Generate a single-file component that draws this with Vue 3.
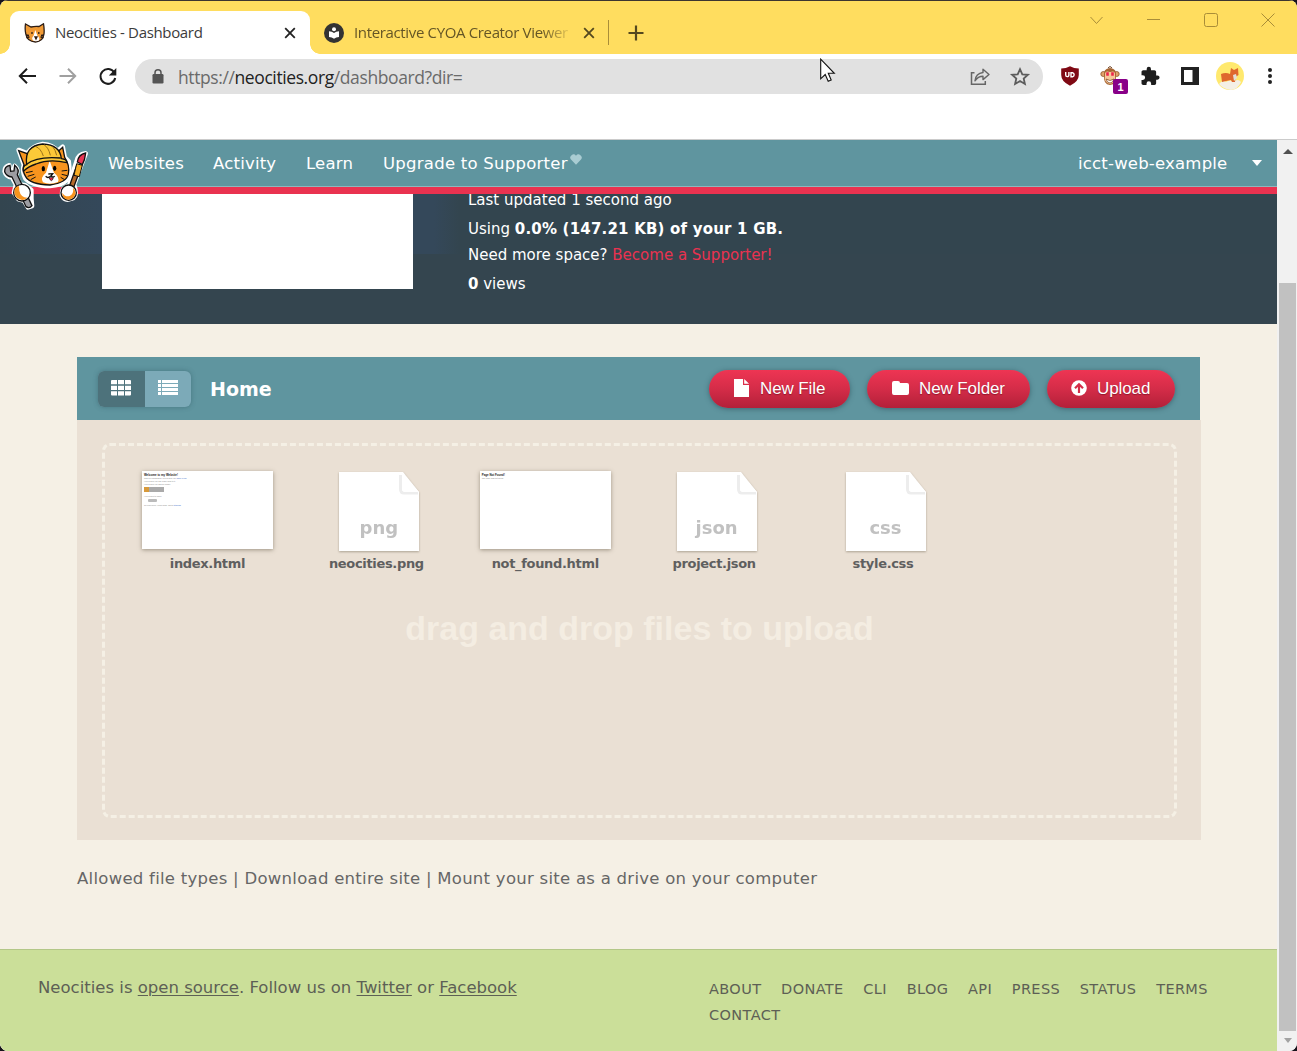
<script setup>
const navLinks = [
  { label: 'Websites', cls: 'websites' },
  { label: 'Activity', cls: 'activity' },
  { label: 'Learn', cls: 'learn' },
]
const files = [
  { name: 'index.html', kind: 'index' },
  { name: 'neocities.png', kind: 'doc', ext: 'png' },
  { name: 'not_found.html', kind: 'missing' },
  { name: 'project.json', kind: 'doc', ext: 'json' },
  { name: 'style.css', kind: 'doc', ext: 'css' },
]
const footerLinks = ['ABOUT', 'DONATE', 'CLI', 'BLOG', 'API', 'PRESS', 'STATUS', 'TERMS', 'CONTACT']
</script>

<template>
  <div class="window">
    <header class="titlebar">
      <div class="tab active">
        <svg class="favicon" width="22" height="20" viewBox="0 0 22 20">
          <path d="M1.500 1 L7 4 Q11 3 15 3.500 L19.500 .8 Q20.500 6 20 11 Q19 18.500 11.500 19 Q3 18.500 1.800 11 Q.7 6 1.500 1Z" fill="#f09a35" stroke="#2d1d15" stroke-width="1.300" />
          <path d="M11.300 7 L9.500 13 Q7 15 9 17.500 Q12 19 15 17.500 Q16 14.500 13.500 13Z" fill="#fff" />
          <path d="M8 9v2M14.800 9v2M11 14h2l-1 2zM2 12l3 .5M2.500 14.500l3-.5M20 12l-3 .5M19.500 14.500l-3-.5" stroke="#2d1d15" stroke-width="1.300" fill="none" />
        </svg>
        <span class="tab-title first">Neocities - Dashboard</span>
        <svg class="tab-close" width="12" height="12" viewBox="0 0 12 12"><path d="M1.200 1.200l9.600 9.600M10.800 1.200l-9.600 9.600" stroke="#222" stroke-width="1.800" /></svg>
      </div>
      <div class="tab idle">
        <svg class="favicon" width="20" height="20" viewBox="0 0 20 20">
          <circle cx="10" cy="10" r="10" fill="#333" />
          <circle cx="10" cy="6.200" r="2" fill="#fff" />
          <path d="M5 8.200 Q8 8.500 10 10 Q12 8.500 15 8.200V14 Q12 14.200 10 15.800 Q8 14.200 5 14Z" fill="#fff" />
        </svg>
        <span class="tab-title second">Interactive CYOA Creator Viewer</span>
        <svg class="tab-close" width="12" height="12" viewBox="0 0 12 12"><path d="M1.200 1.200l9.600 9.600M10.800 1.200l-9.600 9.600" stroke="#54481f" stroke-width="1.800" /></svg>
      </div>
      <i class="tab-divider"></i>
      <svg class="new-tab" width="16" height="16" viewBox="0 0 16 16"><path d="M8 .5v15M.5 8h15" stroke="#54481f" stroke-width="2.200" /></svg>
      <div class="window-buttons">
        <svg width="57" height="20" viewBox="0 0 57 20"><path d="M22.500 7l6 6.500 6-6.500" fill="none" stroke="#a98d38" /></svg>
        <svg width="57" height="20" viewBox="0 0 57 20"><path d="M22 9.500h13" stroke="#a98d38" /></svg>
        <svg width="57" height="20" viewBox="0 0 57 20"><rect x="22.500" y="3.500" width="13" height="13" rx="2" fill="none" stroke="#a98d38" /></svg>
        <svg width="57" height="20" viewBox="0 0 57 20"><path d="M22.500 3.500l13 13M35.500 3.500l-13 13" stroke="#a98d38" /></svg>
      </div>
    </header>

    <div class="toolbar">
      <svg class="cell" viewBox="0 0 40 40"><path d="M29 20H13.500M20 12.800L12.800 20l7.200 7.200" fill="none" stroke="#1d1d1d" stroke-width="2" /></svg>
      <svg class="cell" viewBox="0 0 40 40"><path d="M12.500 20H28M21 12.800l7.200 7.200-7.200 7.200" fill="none" stroke="#a0a0a0" stroke-width="2" /></svg>
      <svg class="cell" viewBox="0 0 40 40"><path d="M27.300 16.600A7.400 7.400 0 1 0 28.200 22" fill="none" stroke="#1d1d1d" stroke-width="2" /><path d="M29.300 12v7.500h-7.500z" fill="#1d1d1d" /></svg>
      <div class="omnibox">
        <svg class="lock" width="12" height="15" viewBox="0 0 12 15"><rect x=".5" y="5" width="11" height="9.500" rx="1.200" fill="#555" /><path d="M3 6V3.800a3 3 0 0 1 6 0V6" fill="none" stroke="#555" stroke-width="1.500" /></svg>
        <span class="url">https://<b>neocities.org</b>/dashboard?dir=</span>
        <svg class="omni-icon" width="40" height="35" viewBox="0 0 40 35"><path d="M14.500 13.800H11.500V25.300H25.300V22" fill="none" stroke="#666" stroke-width="1.500" /><path d="M15 21.800Q15.800 14.300 23 13.500V10.200L29 15.500 23 20.600V17.200Q18 17.200 15 21.800Z" fill="none" stroke="#666" stroke-width="1.400" stroke-linejoin="round" /></svg>
        <svg class="omni-icon" width="40" height="35" viewBox="0 0 40 35"><path d="M20 10.200l2.300 5.100 5.600.5-4.200 3.700 1.200 5.500-4.900-2.900-4.900 2.900 1.200-5.500-4.200-3.700 5.600-.5z" fill="none" stroke="#5c5c5c" stroke-width="1.800" /></svg>
      </div>
      <div class="extensions">
        <div class="cell">
          <svg width="18" height="20" viewBox="0 0 18 20"><path d="M9 .3Q13 2.500 17.800 2.500V9Q17.800 15.500 9 19.700 .2 15.500 .2 9V2.500Q5 2.500 9 .3Z" fill="#7f0914" /><path d="M4.700 6v3a1.600 1.600 0 0 0 3.200 0V6" fill="none" stroke="#fff" stroke-width="1.400" /><path d="M10 6.700h1.500a2.100 2.100 0 0 1 0 4.100H10z" fill="none" stroke="#fff" stroke-width="1.400" /></svg>
        </div>
        <div class="cell monkey">
          <svg width="20" height="20" viewBox="0 0 20 20"><circle cx="3.300" cy="8" r="2.500" fill="#e0a26b" stroke="#8a5228" stroke-width=".8" /><circle cx="16.700" cy="8" r="2.500" fill="#e0a26b" stroke="#8a5228" stroke-width=".8" /><path d="M4 9Q3 3 10 2Q17 3 16 9Q17 18.500 10 19Q3 18.500 4 9Z" fill="#a66532" /><path d="M10 6Q4.500 4 5 9Q3.500 17 10 18Q16.500 17 15 9Q15.500 4 10 6Z" fill="#f6c89b" /><path d="M7.500 6.200v3.500M12.500 6.200v3.500" stroke="#ed254b" stroke-width="2.600" /><path d="M6 13q4 3 8 0q-1 4-4 4t-4-4Z" fill="#fff" stroke="#895029" stroke-width=".8" /><path d="M8 2l2-1.500 2 1.500" stroke="#6b3b1b" fill="none" /></svg>
          <span class="badge">1</span>
        </div>
        <div class="cell">
          <svg width="24" height="24" viewBox="0 0 24 24"><path d="M20.500 11H19V7c0-1.100-.9-2-2-2h-4V3.500a2.500 2.500 0 0 0-5 0V5H4c-1.100 0-2 .9-2 2v3.800h1.500a2.700 2.700 0 0 1 0 5.400H2V20c0 1.100.9 2 2 2h3.800v-1.500a2.700 2.700 0 0 1 5.400 0V22H17c1.100 0 2-.9 2-2v-4h1.500a2.500 2.500 0 0 0 0-5z" transform="translate(1.800 2) scale(.86)" fill="#1d1d1d" /></svg>
        </div>
        <div class="cell">
          <svg width="18" height="18" viewBox="0 0 18 18"><path d="M0 0h18v18H0z" fill="#222" /><path d="M3 3h8.500v12H3z" fill="#fff" /></svg>
        </div>
        <div class="cell">
          <svg width="28" height="28" viewBox="0 0 28 28"><circle cx="14" cy="14" r="14" fill="#ffe96e" /><path d="M3 22Q7 17 10 20Q14 17 17 20Q22 16 25 20Q22 27 15 28Q7 27 3 22Z" fill="#f4f0e6" /><path d="M5 12q5-2 9 0l1-6 3 2 4-2 .5 7-3 2-.5 5h-3l-1-2-5 1-4 1Z" fill="#df682e" /><path d="M17 13l3-1 1 4-3 3Z" fill="#e4dfd7" /></svg>
        </div>
        <div class="cell dots"><i></i><i></i><i></i></div>
      </div>
    </div>

    <div class="viewport">
      <main class="page">
        <nav class="site-nav">
          <a v-for="l in navLinks" :key="l.label" :class="l.cls">{{ l.label }}</a>
          <a class="upgrade">Upgrade to Supporter</a>
          <svg class="heart" width="12" height="11" viewBox="0 0 12 11"><path d="M6 10.800L1 5.600A3 3 0 0 1 6 1.700 3 3 0 0 1 11 5.600Z" fill="#a9ccd2" /></svg>
          <a class="user">icct-web-example</a>
          <i class="caret"></i>
          <svg class="mascot" width="90" height="83" viewBox="0 0 270 249">
            <g stroke="#fff" stroke-width="14" stroke-linejoin="round" fill="#fff">
              <path d="M56 60L82 70Q96 48 128 42Q160 44 172 64L188 50 194 82 206 94Q212 130 198 152Q184 166 150 168Q95 166 76 145Q65 122 72 105Z" />
              <path d="M28 106Q14 110 14 124Q18 140 36 142L48 164 42 188 56 208 72 212 84 232 96 228 94 206 94 180 76 166 60 164 48 136Q58 120 44 108L40 124 28 124Z" />
              <path d="M257 70Q234 72 230 94L218 130 208 166Q184 174 186 196Q194 214 214 206Q230 202 226 178L222 164 244 104Z" />
            </g>
            <path d="M30 106Q13 109 14 125Q19 139 36 141L78 230Q88 237 96 227L52 134Q60 119 44 106L42 123 32 124Z" fill="#9d9da2" stroke="#111" stroke-width="4" />
            <path d="M56 62L84 72Q100 60 128 60Q160 60 170 68L188 52 194 82Q210 105 205 132Q200 158 150 165Q90 163 77 140Q65 120 72 104Z" fill="#f7941e" stroke="#111" stroke-width="4" />
            <path d="M149 92L138 128Q120 142 129 157Q150 166 174 156Q180 142 162 128Z" fill="#fff" />
            <path d="M80 104Q72 48 128 42Q180 44 184 86Q201 88 200 98Q148 86 108 102Q84 110 70 124Q67 108 80 104Z" fill="#fcc938" stroke="#111" stroke-width="4" />
            <path d="M80 103Q110 78 182 84" fill="none" stroke="#111" stroke-width="4" />
            <path d="M108 50Q122 55 130 78M132 44Q146 53 151 76M158 50Q166 59 170 76" fill="none" stroke="#9b711a" stroke-width="3" />
            <ellipse cx="130" cy="116" rx="5" ry="8" /><ellipse cx="164" cy="115" rx="5" ry="8" />
            <path d="M145 132L158 131 153 138Q160 144 164 138M152 138Q144 146 137 139" fill="none" stroke="#111" stroke-width="4" />
            <path d="M147 143h13q-5 18-13 0Z" fill="#eb2450" stroke="#111" stroke-width="2" />
            <path d="M78 128l20-4M83 139l20-6M92 149l15-8M185 123l17-2M185 133l17 4M182 142l12 7" stroke="#111" stroke-width="3" />
            <path d="M231 104L207 172 220 175 245 107Z" fill="#b66a2c" stroke="#111" stroke-width="4" />
            <path d="M230 101L247 106 238 140 222 136Z" fill="#f8ac22" stroke="#111" stroke-width="3" />
            <path d="M257 69Q235 73 232 96L247 104Q255 90 257 69Z" fill="#e93453" stroke="#111" stroke-width="4" />
            <circle cx="66" cy="188" r="25" fill="#fff" stroke="#111" stroke-width="4" /><path d="M44 176Q38 200 60 208Q70 213 82 203Q62 202 58 182Q58 170 56 168Q46 170 44 176Z" fill="#f7941e" />
            <circle cx="206" cy="188" r="23" fill="#fff" stroke="#111" stroke-width="4" /><path d="M186 188Q188 208 206 209Q222 208 227 190Q226 178 219 173Q222 192 209 198Q196 202 186 188Z" fill="#f7941e" />
          </svg>
        </nav>

        <section class="site-info">
          <div class="screenshot"></div>
          <div class="stats">
            <p class="s1">Last updated 1 second ago</p>
            <p class="s2">Using <strong>0.0% (147.21 KB) of your 1 GB.</strong></p>
            <p class="s3">Need more space? <a>Become a Supporter!</a></p>
            <p class="s4"><strong>0</strong> views</p>
          </div>
        </section>

        <section class="content">
          <div class="files-header">
            <div class="view-toggle">
              <span class="on"><svg width="20" height="16" viewBox="0 0 20 16"><path d="M0 1q0-1 1-1h5v4.200H0zM7 0h6v4.200H7zM14 0h5q1 0 1 1v3.200h-6zM0 5.700h6v4.300H0zM7 5.700h6v4.300H7zM14 5.700h6v4.300h-6zM0 11.300h6v4.200H1q-1 0-1-1zM7 11.300h6v4.200H7zM14 11.300h6v3.200q0 1-1 1h-5z" fill="#fff" /></svg></span>
              <span><svg width="20" height="16" viewBox="0 0 20 16"><path d="M0 0h3v3H0zM4 0h16v3H4zM0 4h3v3H0zM4 4h16v3H4zM0 8h3v3H0zM4 8h16v3H4zM0 12h3v3H0zM4 12h16v3H4z" fill="#fff" /></svg></span>
            </div>
            <h2>Home</h2>
            <button class="b-file"><svg width="15" height="18" viewBox="0 0 15 18"><path d="M0 0h9v6h6v12H0z" fill="#fff" /><path d="M10.200 0L15 4.800h-4.800z" fill="#fff" /></svg><span>New File</span></button>
            <button class="b-folder"><svg width="17" height="14" viewBox="0 0 17 14"><path d="M0 2Q0 0 2 0h4q2 0 2 2h7q2 0 2 2v8q0 2-2 2H2q-2 0-2-2z" fill="#fff" /></svg><span>New Folder</span></button>
            <button class="b-upload"><svg width="16" height="16" viewBox="0 0 16 16"><circle cx="8" cy="8" r="7.800" fill="#fff" /><path d="M8 13V4.500M4 8.200l4-4 4 4" fill="none" stroke="#d42c48" stroke-width="2.200" /></svg><span>Upload</span></button>
          </div>
          <div class="files-body">
            <div class="dropzone">
              <div class="files">
                <div v-for="f in files" :key="f.name" class="file">
                  <div v-if="f.kind === 'doc'" class="doc">
                    <svg width="80" height="79" viewBox="0 0 80 79">
                      <path d="M0 0H64L80 20V79H0Z" fill="#fff" />
                      <path d="M61.500 3V17Q61.500 21 65 21H79" fill="none" stroke="#ededed" stroke-width="3" />
                      <path d="M63 1V17Q63 20 66 20H80Z" fill="#fff" />
                    </svg>
                    <span>{{ f.ext }}</span>
                  </div>
                  <div v-else class="thumb">
                    <template v-if="f.kind === 'index'">
                      <b>Welcome to my Website!</b>
                      <small>This is a paragraph! Here's how you <u>make a link</u></small>
                      <small>Here's how you can make bold text.</small>
                      <small>Here's how you add an image</small>
                      <i class="pic"></i>
                      <small>Here's how to make</small>
                      <i class="list"></i>
                      <small>To learn more HTML/CSS, check <u>tutorials</u></small>
                    </template>
                    <template v-else>
                      <b>Page Not Found!</b>
                      <small>The page was not found.</small>
                    </template>
                  </div>
                  <span class="name">{{ f.name }}</span>
                </div>
              </div>
              <div class="hint">drag and drop files to upload</div>
            </div>
          </div>
          <p class="site-actions">Allowed file types | Download entire site | Mount your site as a drive on your computer</p>
        </section>

        <footer class="site-footer">
          <p class="credits">Neocities is <u>open source</u>. Follow us on <u>Twitter</u> or <u>Facebook</u></p>
          <div class="footer-links"><a v-for="l in footerLinks" :key="l">{{ l }}</a></div>
        </footer>
      </main>
      <aside class="scrollbar"><i class="up"></i><i class="track"></i><i class="down"></i></aside>
    </div>

    <svg class="cursor" width="16" height="26" viewBox="0 0 16 26"><path d="M.7 1.200V20.800L5.200 16.500 8.200 23.300 11.200 22 8.300 15.300H14.300Z" fill="#fff" stroke="#111" stroke-width="1.100" /></svg>
  </div>
</template>

<style>
body { margin: 0; background: #17121b; }
</style>

<style scoped>
* { box-sizing: border-box; }
p, h2 { margin: 0; }
svg { display: block; flex: none; }
.window { position: relative; width: 1297px; height: 1051px; overflow: hidden; background: #fff; border-radius: 8px; font-family: Verdana, "DejaVu Sans", sans-serif; display: flex; flex-direction: column; }

.titlebar { height: 54px; flex: none; background: #ffdd5f; border-top: 1px solid #3d3530; display: flex; align-items: flex-start; font-family: "Segoe UI", "Open Sans", sans-serif; }
.tab { display: flex; align-items: center; height: 43px; margin-top: 10px; font-size: 15px; white-space: nowrap; }
.tab.active { position: relative; margin-left: 10px; width: 300px; background: #fff; border-radius: 9px 9px 0 0; padding-left: 14px; color: #3b3b3b; }
.tab.active::before, .tab.active::after { content: ""; position: absolute; bottom: 0; width: 10px; height: 10px; }
.tab.active::before { left: -10px; background: radial-gradient(circle at 0 0, #ffdd5f 9.500px, #fff 10px); }
.tab.active::after { right: -10px; background: radial-gradient(circle at 100% 0, #ffdd5f 9.500px, #fff 10px); }
.tab.idle { width: 298px; padding-left: 14px; color: #655626; }
.tab-title { flex: none; line-height: 20px; padding-bottom: 2px; }
.tab-title.first { margin-left: 9px; width: 229px; letter-spacing: -0.33px; }
.tab-title.second { margin-left: 10px; width: 229px; letter-spacing: -0.35px; -webkit-mask-image: linear-gradient(90deg, #000 188px, transparent 220px); }
.tab-divider { width: 1px; height: 25px; background: #a98d38; margin-top: 19px; }
.new-tab { margin: 24px 0 0 19px; }
.window-buttons { display: flex; margin: 9px 1px 0 auto; }

.toolbar { height: 86px; flex: none; border-bottom: 1px solid #cbcbcb; display: flex; align-items: flex-start; padding: 2px 7px 0; }
.cell { width: 40px; height: 40px; flex: none; display: flex; align-items: center; justify-content: center; }
.omnibox { display: flex; align-items: center; width: 908px; height: 35px; margin: 3px 7px 0 8px; background: #e1e1e1; border-radius: 18px; }
.lock { margin: 0 14px 0 17px; }
.url { flex: 1; font-family: "Segoe UI", "Open Sans", sans-serif; font-size: 17.500px; line-height: 24px; color: #6a6a6a; letter-spacing: -0.4px; }
.url b { font-weight: 400; color: #222; }
.omni-icon:last-child { margin-right: 3px; }
.extensions { display: flex; }
.monkey { position: relative; }
.badge { position: absolute; left: 23px; top: 23px; width: 15px; height: 15px; border-radius: 2px; background: #880088; color: #fff; font: bold 11px/16px "Liberation Sans", sans-serif; text-align: center; }
.dots { flex-direction: column; gap: 2px; }
.dots i { width: 4px; height: 4px; border-radius: 2px; background: #222; }

.viewport { display: flex; flex: 1; min-height: 0; }
.page { width: 1277px; background: #f5f0e5; display: flex; flex-direction: column; }
.site-nav { position: relative; height: 54px; flex: none; display: flex; background: #5f959f; border-bottom: 7px solid #e93250; box-shadow: inset 0 -1px #8db6bc; color: #fff; font-size: 16.500px; letter-spacing: .2px; line-height: 47px; white-space: nowrap; padding-left: 108px; }
.site-nav a { flex: none; }
.websites { width: 105px; }
.activity { width: 93px; }
.learn { width: 77px; }
.upgrade { width: 187px; letter-spacing: .25px; }
.heart { margin-top: 14px; }
.user { margin-left: auto; width: 151px; letter-spacing: .2px; }
.caret { border: 5px solid transparent; border-top: 6px solid #fff; border-bottom: 0; margin: 20px 15px 0 23px; height: 0; }
.mascot { position: absolute; left: 0; top: -10px; }

.site-info { height: 130px; flex: none; display: flex; background: #34454f linear-gradient(90deg, #33454f 0, #34485a 8%, #34485a 34%, #33454f 36%) 0 0 / 100% 60px no-repeat; padding-left: 102px; }
.screenshot { width: 311px; height: 95px; background: #fff; margin-right: 55px; }
.stats { color: #fff; font-size: 15px; line-height: 20px; white-space: nowrap; }
.s1 { margin-top: -4px; }
.s2 { margin-top: 9px; }
.s2 strong { letter-spacing: .2px; }
.s3 { margin-top: 6px; }
.s4 { margin-top: 9px; }
.stats a { color: #e93250; }

.content { padding: 33px 77px 0; height: 625px; flex: none; }
.files-header { height: 63px; background: #5f959f; display: flex; align-items: center; padding: 0 25px 0 21px; color: #fff; width: 1123px; }
.view-toggle { display: flex; width: 93px; height: 36px; border-radius: 6px; overflow: hidden; box-shadow: 0 0 5px rgba(40, 80, 90, .45); background: #7caab8; }
.view-toggle span { flex: 1; display: flex; justify-content: center; padding-top: 9px; }
.view-toggle .on { background: #4d727b; }
h2 { font-size: 19px; line-height: 24px; margin: 1px auto 0 19px; }
button { display: flex; align-items: center; height: 38px; border: 0; border-radius: 19px; padding: 0 0 2px 25px; margin-left: 17px; color: #fff; font: 17px/20px "Liberation Sans", sans-serif; letter-spacing: -.1px; background: linear-gradient(#ee3553, #d42c48 50%, #b32039); box-shadow: 0 1px 5px rgba(30, 60, 70, .5); white-space: nowrap; text-shadow: 0 1px 1px rgba(90, 0, 20, .5); }
button span { padding-top: 2px; }
.b-file { width: 141px; }
.b-file span { margin-left: 11px; }
.b-folder { width: 163px; }
.b-folder span { margin-left: 10px; }
.b-upload { width: 128px; padding-left: 24px; }
.b-upload span { margin-left: 10px; }
.files-body { width: 1124px; height: 420px; background: #eae0d4; padding: 23px 24px 22px 25px; }
.dropzone { height: 375px; border: 3px dashed #f5f0e5; border-radius: 8px; padding: 25px 18px 0; }
.files { display: flex; height: 110px; }
.file { width: 168.900px; flex: none; height: 110px; display: flex; flex-direction: column; align-items: center; }
.thumb { width: 131px; height: 78px; background: #fff; box-shadow: 0 1px 4px rgba(80, 70, 50, .5); padding: 2px; margin-bottom: 5px; overflow: hidden; }
.thumb b, .thumb small { display: block; white-space: nowrap; color: #222; font: bold 2.900px/4px "Liberation Sans", sans-serif; }
.thumb small { font-weight: 400; font-size: 2px; line-height: 3px; color: #888; }
.thumb u { color: #4067c9; text-decoration: none; }
.pic { display: block; width: 20px; height: 5px; margin: 1px 0 3px; background: linear-gradient(90deg, #d79a3c 5px, #aaa 5px); }
.list { display: block; width: 9px; height: 3px; margin: 1px 4px 2px; background: #bbb; border-radius: 1px; }
.doc { position: relative; margin: 1px 0 3px 5px; filter: drop-shadow(0 1px 1px rgba(80, 70, 50, .4)); }
.doc span { position: absolute; left: 0; top: 44px; width: 80px; text-align: center; font-size: 18px; line-height: 24px; font-weight: 700; color: #c1c1c1; }
.name { font-size: 13px; line-height: 20px; font-weight: 700; color: #5f5f5f; letter-spacing: -.33px; }
.hint { text-align: center; font: bold 34px/40px "Liberation Sans", sans-serif; color: #f4ede2; margin-top: 27px; }
.site-actions { margin-top: 28px; font-size: 16.500px; letter-spacing: .27px; line-height: 22px; color: #666; white-space: nowrap; }

.site-footer { flex: 1; background: #cbdf99; border-top: 1px solid #b3c788; display: flex; padding: 0 20px 0 38px; color: #5d6055; font-size: 16.500px; }
.credits { width: 671px; line-height: 22px; margin-top: 27px; white-space: nowrap; }
.credits u { text-underline-offset: 2px; }
.footer-links { flex: 1; display: flex; flex-wrap: wrap; align-content: flex-start; column-gap: 19.700px; margin-top: 26px; font-size: 14.500px; letter-spacing: .38px; line-height: 26px; }

.scrollbar { width: 20px; background: #f1f1f1; display: flex; flex-direction: column; align-items: center; padding-left: 1px; }
.scrollbar .up { border: 5px solid transparent; border-bottom: 5px solid #505050; border-top: 0; margin-top: 9px; }
.scrollbar .track { width: 17px; height: 748px; margin-top: 129px; background: #c1c1c1; }
.scrollbar .down { border: 4px solid transparent; border-top: 5px solid #a3a3a3; border-bottom: 0; margin-top: 7px; }
.cursor { position: absolute; left: 820px; top: 58px; }
</style>
